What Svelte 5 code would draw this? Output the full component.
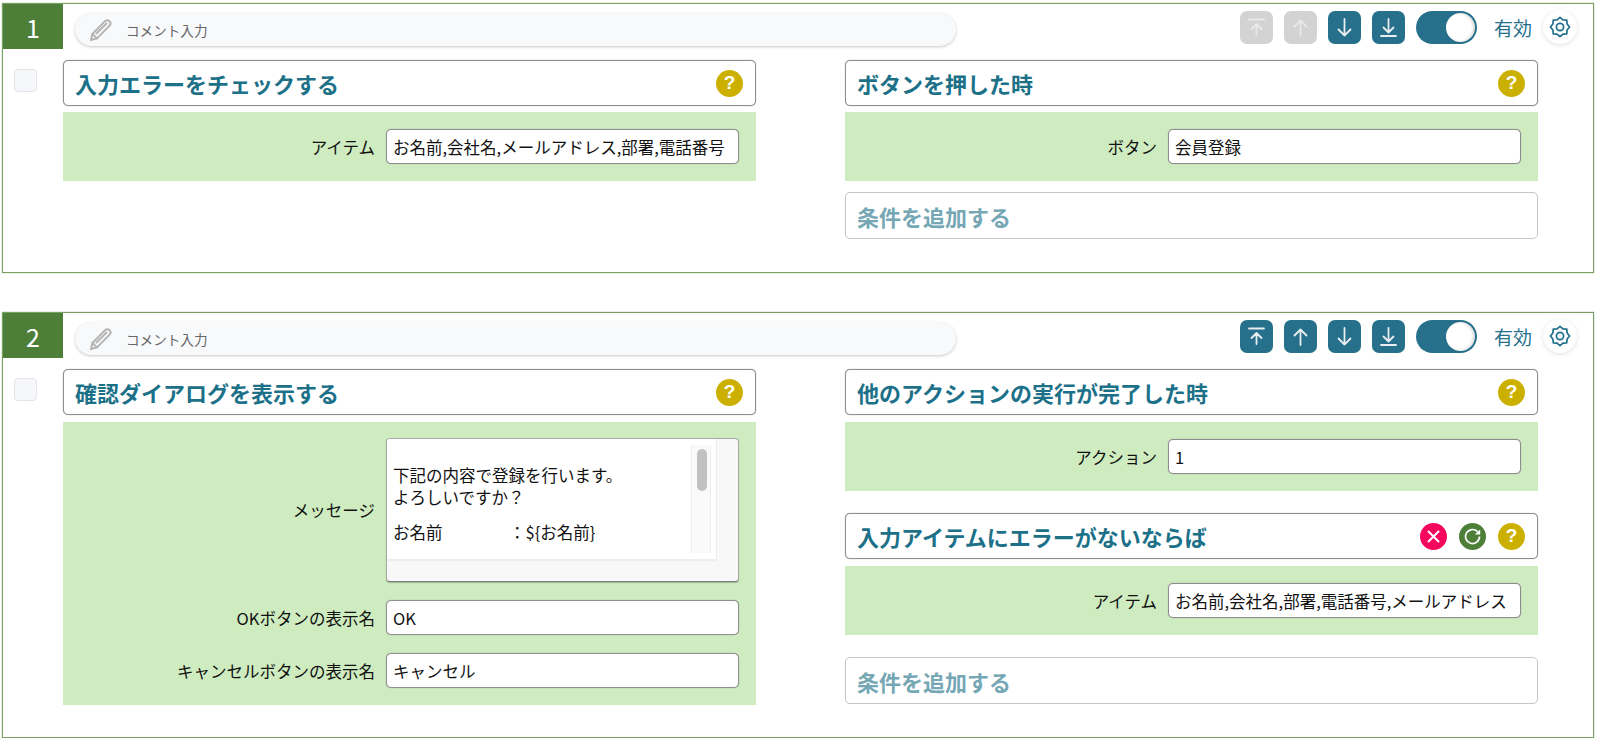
<script>
  const icons = {
    top: 'M9 8.5h15M16.5 24V13M11.5 18l5-5 5 5',
    up: 'M16.5 25V10M10.5 15.5l6-6 6 6',
    down: 'M16.5 8v16.5M10.5 18.5l6 6 6-6',
    bottom: 'M16.5 8v13.5M11.5 16.5l5 5 5-5M9 25h15'
  };
  // gear outline: eight lobes
  const gear = Array.from({ length: 16 }, (_, i) => {
    const r = i % 2 ? 7.7 : 9.6;
    const a = ((i * 22.5 - 90) * Math.PI) / 180;
    return `${(11 + r * Math.cos(a)).toFixed(2)},${(11 + r * Math.sin(a)).toFixed(2)}`;
  }).join(' ');
  const cards = [
    {
      no: 1,
      off: [true, true, false, false],
      action: '入力エラーをチェックする',
      fields: [{ label: 'アイテム', value: 'お名前,会社名,メールアドレス,部署,電話番号' }],
      when: [{ title: 'ボタンを押した時', label: 'ボタン', value: '会員登録' }]
    },
    {
      no: 2,
      off: [false, false, false, false],
      action: '確認ダイアログを表示する',
      fields: [
        { label: 'メッセージ', memo: true },
        { label: 'OKボタンの表示名', value: 'OK' },
        { label: 'キャンセルボタンの表示名', value: 'キャンセル' }
      ],
      when: [
        { title: '他のアクションの実行が完了した時', label: 'アクション', value: '1' },
        { title: '入力アイテムにエラーがないならば', label: 'アイテム', value: 'お名前,会社名,部署,電話番号,メールアドレス', extra: true }
      ]
    }
  ];
</script>

{#snippet help()}
  <span class="round help">?</span>
{/snippet}

{#snippet panel(rows)}
  <div class="panel">
    {#each rows as row}
      <div class="row">
        <span class="label">{row.label}</span>
        {#if row.memo}
          <div class="memo">
            <div class="memo-inner">
              <p>下記の内容で登録を行います。<br />よろしいですか？</p>
              <p class="line"><span class="key">お名前</span>：${'{'}お名前{'}'}</p>
              <div class="track"><i></i></div>
            </div>
          </div>
        {:else}
          <div class="input">{row.value}</div>
        {/if}
      </div>
    {/each}
  </div>
{/snippet}

<div class="page">
  {#each cards as card}
    <section class="card" class:tall={card.no === 2}>
      <header class="head">
        <div class="no">{card.no}</div>
        <div class="comment">
          <svg width="24" height="24" viewBox="0 0 24 24" fill="none" stroke="#b4b4b4" stroke-width="2" stroke-linejoin="round" stroke-linecap="round">
            <path d="M2 22l1.4-6L15.8 3.4c1.5-1.4 3.6-1.4 4.8-.1s1.2 3.2-.2 4.6L8 20.4z" />
            <path d="M3.4 16L8 20.4M7.5 15.5L17.5 5.5" />
          </svg>
          <span>コメント入力</span>
        </div>
        <div class="tools">
          {#each Object.values(icons) as d, i}
            <span class="move" class:off={card.off[i]}>
              <svg width="33" height="33" viewBox="0 0 33 33" fill="none" stroke="currentColor" stroke-width="1.8" stroke-linecap="round" stroke-linejoin="round"><path {d} /></svg>
            </span>
          {/each}
          <span class="toggle"><i></i></span>
          <span class="state">有効</span>
          <span class="gear">
            <svg width="22" height="22" viewBox="0 0 22 22" fill="none" stroke="#1f6f8b" stroke-width="1.7" stroke-linejoin="round">
              <polygon points={gear} />
              <circle cx="11" cy="11" r="3.6" />
            </svg>
          </span>
        </div>
      </header>
      <div class="body">
        <div class="check"><i></i></div>
        <div class="col">
          <div class="title"><h3>{card.action}</h3>{@render help()}</div>
          {@render panel(card.fields)}
        </div>
        <div class="col right" class:single={card.when.length === 1}>
          {#each card.when as w}
            <div class="block">
              <div class="title">
                <h3>{w.title}</h3>
                {#if w.extra}
                  <span class="round del">
                    <svg width="15" height="15" viewBox="0 0 15 15" stroke="#fff" stroke-width="2" stroke-linecap="round"><path d="M2.5 2.5l10 10M12.5 2.5l-10 10" /></svg>
                  </span>
                  <span class="round redo">
                    <svg width="19" height="19" viewBox="0 0 19 19" fill="none" stroke="#fff" stroke-width="1.7"><path d="M14.6 4.7A7 7 0 1 0 16.5 9.5" /><path d="M11.8 7.6h5.4V2.4z" fill="#fff" stroke="none" /></svg>
                  </span>
                {/if}
                {@render help()}
              </div>
              {@render panel([w])}
            </div>
          {/each}
          <div class="add">条件を追加する</div>
        </div>
      </div>
    </section>
  {/each}
</div>

<style>
  :global(body) { background: #fff; }
  .page { display: flex; flex-direction: column; gap: 39px; padding: 3px 6px 0 2px; font-family: "Noto Sans CJK JP", "Noto Sans", sans-serif; color: #111; }
  .card { border: 1px solid #78a066; box-shadow: 0 0 1px #78a066; padding-bottom: 31px; }
  .card.tall { padding-bottom: 32px; }
  .head { display: flex; align-items: flex-start; height: 45px; }
  .no { width: 60px; height: 45px; display: flex; align-items: center; justify-content: center; background: #4e7f39; color: #fff; font-size: 25px; }
  .comment { width: 881px; height: 33px; box-sizing: border-box; margin: 9px 0 0 12px; padding-left: 14px; display: flex; align-items: center; gap: 13px; background: #f8f9fb; border-radius: 17px; box-shadow: 0 1px 3px rgba(0, 0, 0, .22); font-size: 13.6px; color: #666; }
  .tools { margin-left: auto; padding: 6px 16px 0 0; display: flex; align-items: center; gap: 11px; }
  .move { width: 33px; height: 33px; border-radius: 7px; background: #26708c; color: #e8eef0; }
  .move svg { display: block; }
  .move.off { background: #d3d3d3; color: #e9e9e9; }
  .toggle { width: 61px; height: 33px; box-sizing: border-box; padding: 2px; border-radius: 17px; background: #26708c; display: flex; justify-content: flex-end; }
  .toggle i { width: 29px; height: 29px; border-radius: 50%; background: #fff; box-shadow: inset -2px 0 3px rgba(0, 0, 0, .15); }
  .state { margin-left: 6px; font-size: 19px; color: #26708c; }
  .gear { width: 34px; height: 34px; border-radius: 50%; background: #fff; box-shadow: 0 1px 4px rgba(0, 0, 0, .12); display: flex; align-items: center; justify-content: center; }
  .body { display: flex; align-items: flex-start; padding-top: 11px; }
  .check { width: 60px; flex: none; padding-top: 9px; }
  .check i { display: block; width: 21px; height: 21px; margin-left: 11px; background: #f6f7fa; border: 1px solid #e2e4e8; border-radius: 4px; }
  .col { width: 693px; flex: none; display: flex; flex-direction: column; }
  .right { margin-left: 89px; gap: 22px; }
  .right.single { gap: 11px; }
  .block { display: flex; flex-direction: column; }
  .title { height: 46px; box-sizing: border-box; display: flex; align-items: center; gap: 12px; padding: 0 12px 0 11px; border: 1px solid #8e8e8e; box-shadow: 0 0 1px #8e8e8e; border-radius: 5px; background: #fff; }
  .title h3 { flex: 1; margin: 0; font-size: 22px; font-weight: 700; color: #1c7189; white-space: nowrap; }
  .round { width: 27px; height: 27px; flex: none; border-radius: 50%; display: flex; align-items: center; justify-content: center; }
  .help { background: #ccb000; color: #fff; font-family: "Liberation Sans", sans-serif; font-size: 19px; font-weight: 700; }
  .del { background: #f5075e; }
  .redo { background: #4e7f39; }
  .panel { margin-top: 6px; padding: 17px 17px 17px 0; display: flex; flex-direction: column; gap: 18px; background: #ceecc0; }
  .tall .panel { margin-top: 7px; }
  .tall .col:not(.right) .panel { padding-top: 16px; }
  .row { display: flex; align-items: center; justify-content: flex-end; gap: 11px; }
  .label { font-size: 16.5px; }
  .input { width: 353px; height: 35px; box-sizing: border-box; padding: 0 6px; display: flex; align-items: center; background: #fff; border: 1px solid #8e8e8e; box-shadow: 0 0 1px #8e8e8e; border-radius: 5px; font-size: 16.5px; white-space: nowrap; overflow: hidden; }
  .memo { width: 353px; height: 144px; box-sizing: border-box; background: #f8f8f8; border: 1px solid #a8a8a8; border-bottom-color: #808080; box-shadow: 0 1px 1px rgba(0, 0, 0, .25); border-radius: 4px; font-size: 16.5px; line-height: 22px; overflow: hidden; }
  .memo-inner { position: relative; width: 330px; height: 122px; box-sizing: border-box; padding: 25px 6px 0; background: #fff; border-right: 1px solid #eee; border-bottom: 2px solid #eee; }
  .memo p { margin: 0; white-space: nowrap; }
  .memo .line { margin-top: 13px; }
  .key { display: inline-block; width: 116px; }
  .track { position: absolute; top: 6px; right: 5px; bottom: 6px; width: 20px; box-sizing: border-box; background: #fafafa; border: solid #eee; border-width: 0 1px; }
  .track i { display: block; width: 10px; height: 42px; margin: 4px 0 0 5px; border-radius: 5px; background: #c1c1c1; }
  .add { height: 47px; box-sizing: border-box; margin-bottom: 2px; padding: 0 11px; display: flex; align-items: center; background: #fff; border: 1px solid #c6c6c6; border-radius: 5px; font-size: 22px; font-weight: 700; color: #76a7b5; }
  .tall .add { margin-bottom: 0; }
</style>
